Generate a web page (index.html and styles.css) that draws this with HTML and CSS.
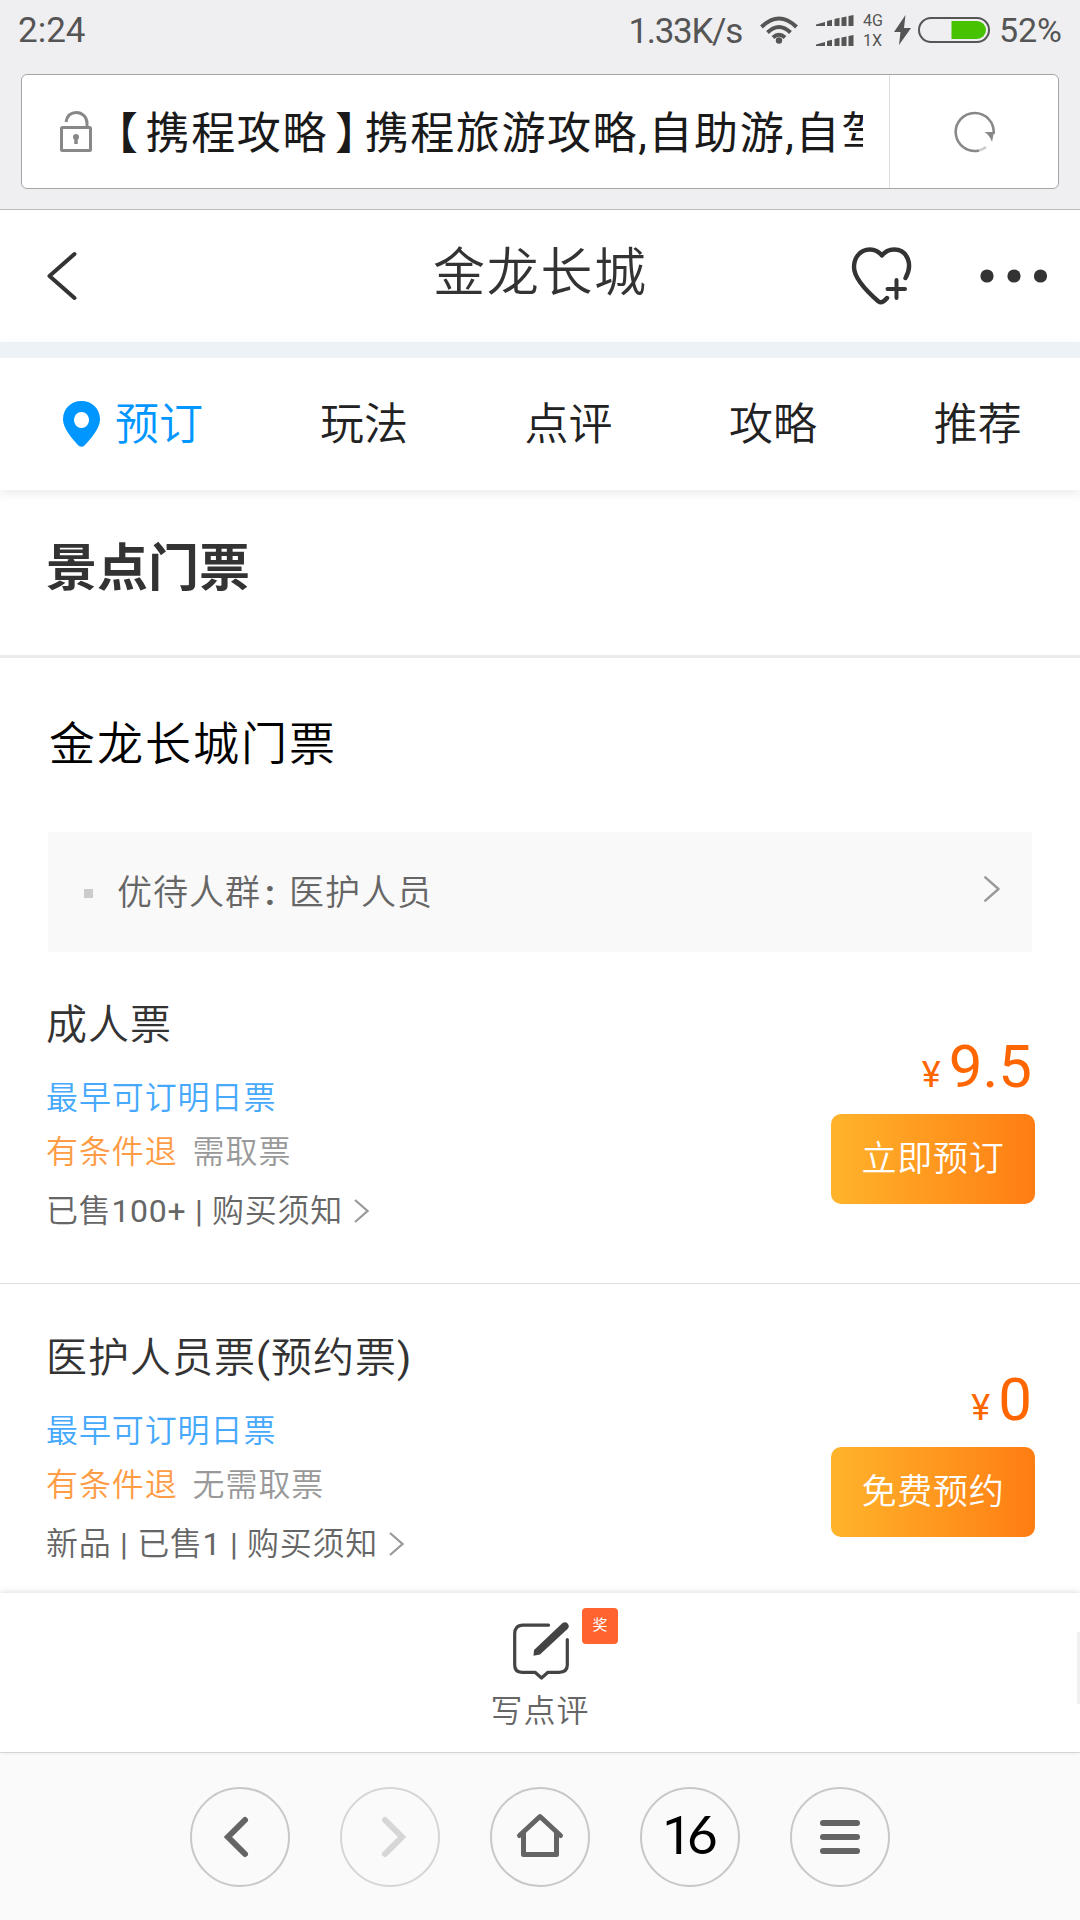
FILE: index.html
```html
<!DOCTYPE html>
<html lang="zh-CN">
<head>
<meta charset="utf-8">
<title>金龙长城</title>
<link rel="stylesheet" href="styles.css">
</head>
<body>
<div class="chrome">
  <div class="status">
    <span class="clock">2:24</span>
    <span class="speed">1.33K/s</span>
    <svg class="wifi" width="38" height="28" viewBox="0 0 38 28" fill="none" stroke="#555" stroke-width="4">
      <path d="M1.500 11Q19-6 36.500 11M7.500 16.500Q19 5.500 30.500 16.500M13 21.500Q19 16 25 21.500"/><circle cx="19" cy="24.500" r="3.200" fill="#555" stroke="none"/>
    </svg>
    <svg class="signal" width="38" height="31" viewBox="0 0 38 31" fill="#555">
      <path id="bars" d="M0 9.500L9 7v4H0zM11 6l5-1.300V11h-5zM18.500 4l5-1.300V11h-5zM25.500 2.500l5-1V11h-5zM32.500 1L37.500 0v11h-5z"/><use href="#bars" y="20"/>
    </svg>
    <span class="nets"><span>4G</span><span>1X</span></span>
    <svg class="bolt" width="17" height="30" viewBox="0 0 17 30" fill="#555"><path d="M11.500 0L0 17h6.500L5 30 17 13H10z"/></svg>
    <svg class="battery" width="72" height="26" viewBox="0 0 72 26"><rect x="1" y="1" width="70" height="24" rx="12" fill="none" stroke="#555" stroke-width="2"/><path d="M33.500 4H59a9 9 0 0 1 0 18H33.500z" fill="#46c200"/></svg>
    <span class="percent">52%</span>
  </div>
  <div class="address">
    <svg class="lock" width="32" height="41" viewBox="0 0 32 41" fill="none" stroke="#888" stroke-width="3"><rect x="1.500" y="16.500" width="29" height="23" rx="1"/><path d="M6 11C7 5 11 1.500 16.500 1.500S27 6 27 12v4"/><circle cx="16" cy="26" r="3" fill="#888" stroke="none"/><path d="M16 26v7" stroke-width="3.500"/></svg>
    <div class="page-title"><span class="open">【</span>携程攻略<span class="close">】</span>携程旅游攻略,自助游,自驾游</div>
    <div class="reload">
      <svg width="42" height="42" viewBox="0 0 42 42" fill="none" stroke="#888" stroke-width="2.600"><path d="M39.600 23A19 19 0 1 0 25 39.500"/><path d="M25 39.500Q29 38.500 32 36" stroke="#ccc"/><path d="M30.500 21H40L38 31Q35.500 24 30.500 21z" fill="#888" stroke="none"/></svg>
    </div>
  </div>
</div>

<header class="header">
  <svg class="back" width="30" height="50" viewBox="0 0 30 50" fill="none" stroke="#333" stroke-width="4" stroke-linecap="round" stroke-linejoin="round"><path d="M27.500 3L2.500 25l25 22"/></svg>
  <h1 class="name">金龙长城</h1>
  <svg class="heart" width="62" height="58" viewBox="0 0 62 58" fill="none" stroke="#333" stroke-width="4.400" stroke-linecap="round" stroke-linejoin="round"><path d="M54.500 31C62 18 57 2.500 43 2.500Q35.500 2.500 31 8.500Q26 2.500 19 2.500C8 2.500 3 12 3 20C3 33 20 48 27.500 54.500Q31 57 36 51"/><path d="M36.500 42h17.500M45.500 33v18" stroke-width="4"/></svg>
  <svg class="more" width="68" height="14" viewBox="0 0 68 14" fill="#333"><circle cx="7" cy="7" r="6.600"/><circle cx="34" cy="7" r="6.600"/><circle cx="60.500" cy="7" r="6.600"/></svg>
</header>

<nav class="tabs">
  <a class="tab active"><svg width="37" height="46" viewBox="0 0 37 46" fill="#0096ff"><path fill-rule="evenodd" d="M18.500 0C29 0 37 7.500 37 18.500C37 27 28 38 21 45Q18.500 46.500 16 45C9 38 0 27 0 18.500C0 7.500 8 0 18.500 0zM18.500 11a7.500 8 0 1 0 .01 0z"/></svg><span>预订</span></a>
  <a class="tab"><span>玩法</span></a>
  <a class="tab"><span>点评</span></a>
  <a class="tab"><span>攻略</span></a>
  <a class="tab"><span>推荐</span></a>
</nav>

<main class="content">
  <h2 class="section">景点门票</h2>
  <h3 class="group">金龙长城门票</h3>
  <div class="notice">
    <span class="dot"></span>
    <span class="notice-text">优待人群<span class="colon">:</span>医护人员</span>
    <svg width="16" height="26" viewBox="0 0 16 26" fill="none" stroke="#999" stroke-width="2.400" stroke-linecap="round" stroke-linejoin="round"><path d="M1.300 1.300L14.500 13 1.300 24.700"/></svg>
  </div>

  <article class="ticket">
    <div class="info">
      <div class="kind">成人票</div>
      <div class="line early">最早可订明日票</div>
      <div class="line"><span class="refund">有条件退</span><span class="pickup">需取票</span></div>
      <div class="line sold">已售<span class="num">100+ | </span>购买须知<svg width="15" height="24" viewBox="0 0 15 24" fill="none" stroke="#999" stroke-width="2.200"><path d="M1 1l12.500 11L1 23"/></svg></div>
    </div>
    <div class="buy">
      <div class="price"><span class="yen">¥</span>9.5</div>
      <a class="button">立即预订</a>
    </div>
  </article>

  <article class="ticket">
    <div class="info">
      <div class="kind">医护人员票<span class="num">(</span>预约票<span class="num">)</span></div>
      <div class="line early">最早可订明日票</div>
      <div class="line"><span class="refund">有条件退</span><span class="pickup">无需取票</span></div>
      <div class="line sold">新品<span class="num"> | </span>已售<span class="num">1 | </span>购买须知<svg width="15" height="24" viewBox="0 0 15 24" fill="none" stroke="#999" stroke-width="2.200"><path d="M1 1l12.500 11L1 23"/></svg></div>
    </div>
    <div class="buy">
      <div class="price"><span class="yen">¥</span>0</div>
      <a class="button">免费预约</a>
    </div>
  </article>
</main>

<footer class="review">
  <div class="review-icon">
    <svg width="56" height="58" viewBox="0 0 56 58" fill="none" stroke="#444" stroke-width="3.200" stroke-linecap="round" stroke-linejoin="round"><path d="M35.500 3.200H10Q1.700 3.200 1.700 12V43Q1.700 50.300 9 50.300H22L28.500 56 35 50.300H46Q54.300 50.300 54.300 43V17.500"/><path d="M20.500 33.800L21 28 49 1.500Q52-.800 54.500 1.500Q57 4 54.500 7L27 32.500z" fill="#444" stroke="none"/></svg>
    <span class="badge">奖</span>
  </div>
  <span class="review-text">写点评</span>
  <span class="scrollbar"></span>
</footer>

<div class="toolbar">
  <a class="circle"><svg width="100" height="100" viewBox="0 0 100 100" fill="none" stroke="#646464" stroke-width="6" stroke-linecap="round"><path d="M55 33L38 50l17 17"/></svg></a>
  <a class="circle dim"><svg width="100" height="100" viewBox="0 0 100 100" fill="none" stroke="#d6d6d6" stroke-width="6" stroke-linecap="round"><path d="M45 33l17 17-17 17"/></svg></a>
  <a class="circle"><svg width="100" height="100" viewBox="0 0 100 100" fill="none" stroke="#646464" stroke-width="5" stroke-linecap="round" stroke-linejoin="round"><path d="M29.500 48.500L50 29.500l20.500 19M33.500 46v21.500h33V46"/></svg></a>
  <a class="circle count"><span><span class="one">1</span>6</span></a>
  <a class="circle"><svg width="100" height="100" viewBox="0 0 100 100" stroke="#646464" stroke-width="6" stroke-linecap="round"><path d="M33 36h34M33 50h34M33 64h34"/></svg></a>
</div>
</body>
</html>
```
FILE: styles.css
```css
* { box-sizing: border-box; }
svg { display: block; flex: none; }
body {
  margin: 0;
  width: 1080px;
  height: 1920px;
  display: flex;
  flex-direction: column;
  overflow: hidden;
  background: #fff;
  color: #333;
  font-family: Roboto, "Noto Sans CJK SC", sans-serif;
  font-weight: 350;
}
h1, h2, h3 { margin: 0; font-weight: 350; }

/* Phone status bar and browser address field */
.chrome {
  height: 210px;
  padding: 0 21px;
  background: #efeff1;
  border-bottom: 1px solid #bbb;
}
.status {
  height: 74px;
  margin: 0 -3px;
  display: flex;
  align-items: center;
  padding-bottom: 14px;
  color: #555;
  font-weight: 400;
}
.clock { font-size: 35px; }
.speed { margin-left: auto; padding-top: 2px; font-size: 35px; letter-spacing: -1.300px; }
.wifi { margin-left: 18px; }
.signal { margin-left: 18px; }
.nets { width: 21px; margin: 1px 10px 0 9px; display: flex; flex-direction: column; font-size: 16px; line-height: 20px; }
.battery { margin: 0 9px 0 7px; }
.percent { width: 63px; font-size: 34px; letter-spacing: -.1px; }
.address {
  height: 115px;
  display: flex;
  align-items: center;
  padding-left: 38px;
  background: #fff;
  border: 1px solid #a5a5a8;
  border-radius: 6px;
}
.page-title {
  width: 771px;
  padding-top: 4px;
  overflow: hidden;
  white-space: nowrap;
  color: #1a1a1a;
  font-size: 44px;
  line-height: 64px;
  letter-spacing: 1.600px;
  font-weight: 400;
}
.open, .close { font-feature-settings: "halt"; }
.open { margin: 0 6px 0 24px; }
.close { margin: 0 6px 0 7px; }
.reload {
  flex: 1;
  height: 113px;
  margin-left: 26px;
  display: flex;
  align-items: center;
  justify-content: center;
  padding-left: 2px;
  border-left: 1px solid #ddd;
}

/* Attraction header */
.header {
  height: 132px;
  display: flex;
  align-items: center;
  padding: 0 32px 0 47px;
}
.name {
  width: 214px;
  margin: 0 204px 4px 356px;
  white-space: nowrap;
  font-size: 52px;
  line-height: 70px;
  letter-spacing: 1.700px;
}
.more { margin-left: auto; }
.tabs {
  position: relative;
  height: 148px;
  display: flex;
  align-items: center;
  padding-left: 29px;
  border-top: 16px solid #edf2f6;
  box-shadow: 0 4px 10px rgba(0, 0, 0, .08);
}
.tab {
  width: 204.600px;
  display: flex;
  justify-content: center;
  align-items: center;
  gap: 15px;
  padding-left: 56px;
  white-space: nowrap;
  color: #222;
  font-size: 44px;
  line-height: 60px;
}
.tab span { padding-top: 2px; }
.tab.active { color: #0096ff; justify-content: flex-start; padding-left: 34px; }

/* Ticket list */
.content { flex: 1; min-height: 0; overflow: hidden; }
.section {
  height: 168px;
  padding: 44px 46px 0;
  border-bottom: 3px solid #ebebeb;
  font-size: 51px;
  line-height: 70px;
  font-weight: 700;
}
.group {
  padding: 51px 49px 53px;
  color: #000;
  font-size: 46px;
  line-height: 70px;
  letter-spacing: 2px;
}
.notice {
  height: 120px;
  margin: 0 48px -1px;
  padding: 0 32px 0 36px;
  display: flex;
  align-items: center;
  background: #f9f9f9;
  color: #666;
}
.notice svg { margin: 0 0 6px auto; }
.dot { width: 9px; height: 9px; margin: 3px 24px 0 0; background: #ccc; }
.notice-text { padding-top: 3px; font-size: 35px; line-height: 50px; letter-spacing: 1px; }
.colon { display: inline-block; width: 28px; padding-left: 4px; font-weight: 700; }
.ticket {
  height: 333px;
  display: flex;
  justify-content: space-between;
  padding: 47px 45px 0 46px;
  border-bottom: 1px solid #ddd;
}
.num { font-weight: 400; }
.kind { font-size: 41px; line-height: 54px; letter-spacing: 1px; margin-bottom: 19px; }
.line { display: flex; align-items: center; font-size: 32px; line-height: 54px; letter-spacing: .9px; white-space: pre; }
.early { color: #46a9fc; }
.refund { color: #ff9c46; }
.pickup { margin-left: 15px; color: #999; }
.sold { margin-top: 5px; color: #666; letter-spacing: .7px; }
.sold svg { margin-left: 11px; }
.buy { padding-top: 39px; display: flex; flex-direction: column; align-items: flex-end; }
.price { height: 60px; padding-right: 3px; color: #f60; font-size: 60px; line-height: 60px; font-weight: 400; }
.yen { margin-right: 8px; font-size: 36px; line-height: 1; }
.button {
  width: 204px;
  height: 90px;
  margin-top: 17px;
  display: flex;
  align-items: center;
  justify-content: center;
  padding-top: 2px;
  border-radius: 10px;
  background: linear-gradient(90deg, #ffb42b, #ff7d13);
  color: #fff;
  font-size: 35px;
  line-height: 50px;
  letter-spacing: .8px;
}

/* Review bar */
.review {
  position: relative;
  height: 159px;
  padding-top: 29px;
  display: flex;
  flex-direction: column;
  align-items: center;
  background: #fff;
  box-shadow: 0 -1px 6px rgba(0, 0, 0, .13);
}
.review-icon { position: relative; width: 56px; height: 58px; margin-left: 2px; }
.badge {
  position: absolute;
  left: 69px;
  top: -14px;
  width: 36px;
  height: 36px;
  border-radius: 4px;
  background: #ff6330;
  color: #fff;
  font-size: 15px;
  line-height: 34px;
  text-align: center;
  font-weight: 400;
}
.review-text { margin-top: 7px; color: #666; font-size: 32px; line-height: 48px; letter-spacing: 1px; }
.scrollbar { position: absolute; right: 0; top: 39px; width: 3px; height: 72px; background: #f0f0f0; }

/* Browser toolbar */
.toolbar {
  height: 168px;
  padding-top: 34px;
  display: flex;
  justify-content: center;
  gap: 50px;
  border-top: 1px solid #ddd;
  background: #fafafa;
}
.circle {
  width: 100px;
  height: 100px;
  display: flex;
  align-items: center;
  justify-content: center;
  border: 2px solid #c8c8c8;
  border-radius: 50%;
}
.dim { border-color: #d6d6d6; }
.count { padding: 0 0 6px; color: #000; font-family: Lato, sans-serif; font-size: 53px; font-weight: 400; }
.one { font-family: Roboto, sans-serif; letter-spacing: -5px; }
```
